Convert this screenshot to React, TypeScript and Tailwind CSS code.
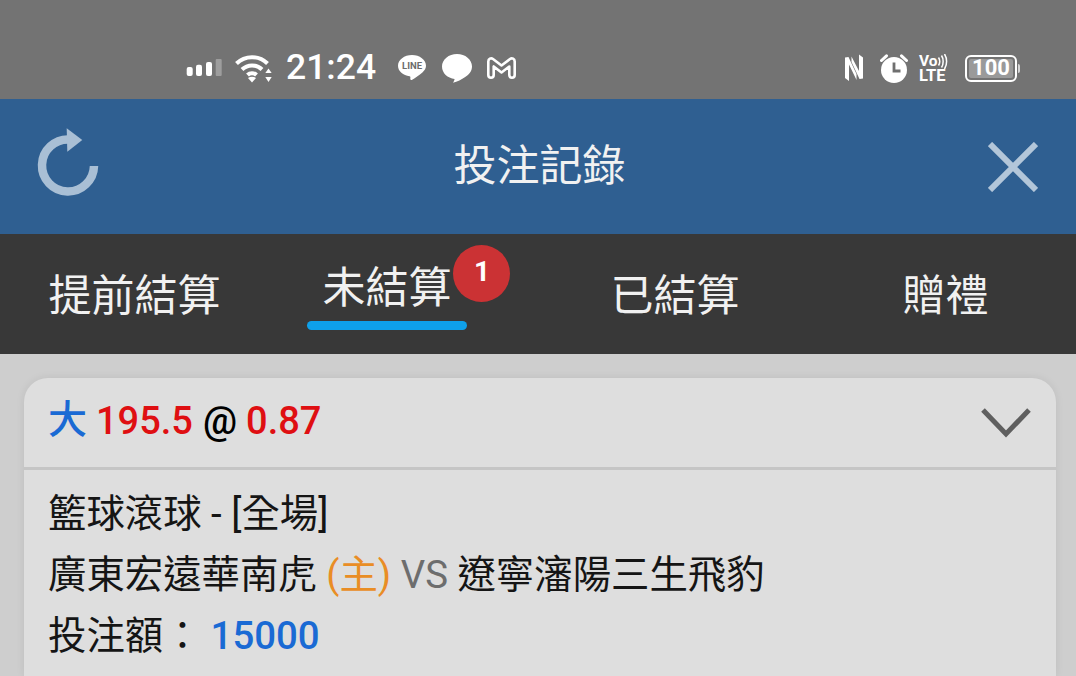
const FONT = "font-['Roboto','Noto_Sans_CJK_TC',sans-serif]";

function SignalIcon() {
  return (
    <svg width="36" height="18" viewBox="0 0 36 18" className="fill-white">
      <rect x="0.7" y="8" width="6" height="9" rx="2" />
      <rect x="10" y="5.7" width="6" height="11.3" rx="2" />
      <rect x="20" y="3" width="6" height="14" rx="2" />
      <rect x="29.7" y="0" width="6" height="17" rx="1" opacity="0.3" />
    </svg>
  );
}

function WifiIcon() {
  return (
    <svg width="38" height="29" viewBox="0 0 38 29" fill="none" stroke="#fff" strokeWidth="4">
      <path d="M1.500 9.500C10 1 24 1 32.500 9.500" />
      <path d="M7 15.500C12.500 10 21.500 10 27 15.500" />
      <path d="M12.500 21C15 18.500 19 18.500 21.500 21" />
      <path d="M17 28.500l-4-4.500c2.400-1.600 5.600-1.600 8 0z" fill="#fff" stroke="none" />
      <path d="M33.500 14.500l3.200 4.500h-6.400zM33.500 28l-3.200-5h6.400z" fill="#fff" stroke="none" />
    </svg>
  );
}

function LineIcon() {
  return (
    <svg width="28" height="27" viewBox="0 0 28 27">
      <path
        d="M14 0C6.300 0 0 4.800 0 10.800c0 5.600 5.200 9.600 11.600 10.400.9.200.9 1 .7 2.400-.1.900.3 1.900 1.500 1.300 3-1.700 7.700-4.700 10.600-7.400C26.800 15.400 28 13.300 28 10.800 28 4.800 21.700 0 14 0z"
        fill="#fff"
      />
      <text x="14" y="14" textAnchor="middle" fontSize="9.500" fontWeight="700" fill="#6b6b6b" fontFamily="Roboto">
        LINE
      </text>
    </svg>
  );
}

function ChatIcon() {
  return (
    <svg width="30" height="29" viewBox="0 0 30 29">
      <path
        d="M15 0C6.700 0 0 5.500 0 12.600c0 6.600 5.600 11.700 12.600 12.400-.2 1.300-.9 2.700-1.700 3.700 4.500-.8 8.700-3.100 12.300-5.600C27.200 20.800 30 17 30 12.600 30 5.500 23.300 0 15 0z"
        fill="#fff"
      />
    </svg>
  );
}

function MailIcon() {
  return (
    <svg width="29" height="22" viewBox="0 0 29 22" fill="none" stroke="#fff" strokeWidth="2.600" strokeLinejoin="round">
      <path d="M1.300 4.500C1.300 1.800 4 .5 6 2l8.500 6.500L23 2c2-1.500 4.700-.2 4.700 2.500V18c0 1.500-1.200 2.700-2.700 2.700s-2.700-1.200-2.700-2.700V9.500l-7.800 6-7.800-6V18c0 1.500-1.200 2.700-2.700 2.700S1.300 19.500 1.300 18z" />
    </svg>
  );
}

function NfcIcon() {
  return (
    <svg width="18" height="30" viewBox="0 0 18 30" className="fill-white">
      <path d="M0 4.500L3.500 4l8 17v6L4 11.500V28L0 25z" />
      <path d="M18 25.500L14.500 26 6.500 9V3.500L14 18V1.500L18 4.500z" />
    </svg>
  );
}

function AlarmIcon() {
  return (
    <svg width="28" height="29" viewBox="0 0 28 29">
      <circle cx="14" cy="16" r="13" fill="#fff" />
      <path d="M1.500 6.500L6.500 1.800M26.500 6.500L21.500 1.800" stroke="#fff" strokeWidth="3" strokeLinecap="round" />
      <path d="M14 8.500V17h6.500" fill="none" stroke="#6f6f6f" strokeWidth="2.800" />
    </svg>
  );
}

function VolteIcon() {
  return (
    <div className="w-[30px] flex flex-col text-white font-bold leading-none">
      <div className="relative h-[15px] text-[15.500px] leading-[15px]">
        Vo
        <svg width="12" height="15" viewBox="0 0 12 15" fill="none" stroke="#fff" strokeWidth="1.500" className="absolute left-[18px] top-0">
          <path d="M1.500 3.500c1.400 2.200 1.400 5.800 0 8M4.500 1.500c2.200 3.200 2.200 8.800 0 12M7.500 0c2.800 4.400 2.800 10.600 0 15" />
        </svg>
      </div>
      <div className="h-[14px] text-[16.500px] leading-[14px]">LTE</div>
    </div>
  );
}

function Battery() {
  return (
    <div className="flex items-center gap-[1px]">
      <div className="w-[52px] h-[27px] rounded-[6px] border-[2.500px] border-white p-[2px] flex">
        <div className="flex-1 rounded-[2px] bg-[#9a9a9a] flex items-center justify-center text-white text-[22px] leading-none font-bold">
          100
        </div>
      </div>
      <div className="w-[2px] h-[9px] rounded-r-sm bg-white/70" />
    </div>
  );
}

function StatusBar() {
  return (
    <div className="h-[99px] bg-[#737373] flex items-center justify-between pl-[186px] pr-[56px] pt-[37px]">
      <div className="flex items-center">
        <SignalIcon />
        <div className="ml-[13px]"><WifiIcon /></div>
        <span className="ml-[13px] text-white text-[35.500px] leading-none font-medium">21:24</span>
        <div className="ml-[22px]"><LineIcon /></div>
        <div className="ml-[16px]"><ChatIcon /></div>
        <div className="ml-[15px]"><MailIcon /></div>
      </div>
      <div className="flex items-center">
        <NfcIcon />
        <div className="ml-[17px]"><AlarmIcon /></div>
        <div className="ml-[11px]"><VolteIcon /></div>
        <div className="ml-[16px]"><Battery /></div>
      </div>
    </div>
  );
}

function Header() {
  return (
    <div className="h-[135px] bg-[#2f5f91] flex items-center justify-between pl-[37px] pr-[38px]">
      <svg width="62" height="70" viewBox="0 0 62 70" fill="none" className="mb-[7px]">
        <path d="M32 11.500A26 26 0 1 0 57 38" stroke="#a9bfd5" strokeWidth="8.500" />
        <path d="M29.700 0.300L45.300 12 30.300 23.700z" fill="#a9bfd5" />
      </svg>
      <h1 className="text-[43px] leading-none text-[#f1f1f1] mr-[8px]">投注記錄</h1>
      <svg width="50" height="50" viewBox="0 0 50 50" stroke="#b3c6d9" strokeWidth="6">
        <path d="M2 2l46 46M48 2L2 48" />
      </svg>
    </div>
  );
}

const TABS = [
  { label: "提前結算", cls: "pt-[4px]" },
  { label: "未結算", cls: "pr-[33px]" },
  { label: "已結算", cls: "pt-[4px] pl-[5px]" },
  { label: "贈禮", cls: "pt-[4px] pl-[8px]" },
];

function Tabs() {
  return (
    <div className="h-[120px] bg-[#383838] grid grid-cols-4">
      {TABS.map((t, i) =>
        i === 1 ? (
          <div key={t.label} className="relative flex flex-col items-center pt-[30px] pr-[33px]">
            <span className="relative text-[43px] leading-[48px] text-[#f1f1f1]">
              {t.label}
              <span className="absolute left-[130px] -top-[19px] w-[57px] h-[57px] rounded-full bg-[#cb3234] flex items-center justify-center text-white text-[28px] font-bold leading-none pl-[2px] pb-[3px]">
                1
              </span>
            </span>
            <div className="w-[160px] h-[9px] rounded-full bg-[#0ea0ea] mt-[9px]" />
          </div>
        ) : (
          <div key={t.label} className={`flex justify-center items-center ${t.cls} text-[43px] leading-none text-[#f1f1f1]`}>
            {t.label}
          </div>
        ),
      )}
    </div>
  );
}

function BetCard() {
  return (
    <div className="rounded-t-[24px] bg-[#dedede] shadow-[0_0_8px_rgba(0,0,0,0.08)] flex-1">
      <div className="h-[92px] border-b-[3px] border-[#c5c5c5] flex items-center justify-between pl-[24px] pr-[25px]">
        <div className="flex items-center text-[38px] font-medium leading-none pb-[4px]">
          <span className="text-[#1a6ad4] text-[39px] font-medium">大</span>
          <span className="ml-[9px] text-[#df0f12]">195.5</span>
          <span className="ml-[10px] text-black">@</span>
          <span className="ml-[9px] text-[#df0f12]">0.87</span>
        </div>
        <svg width="50" height="30" viewBox="0 0 50 30" fill="none" stroke="#5f5f5f" strokeWidth="5">
          <path d="M2 2l23 24L48 2" />
        </svg>
      </div>
      <div className="pl-[24px] pt-[13px] text-[38.400px] leading-[61px] text-[#151515]">
        <div>籃球滾球 - [全場]</div>
        <div>
          廣東宏遠華南虎 <span className="text-[#e98d25]">(主)</span> <span className="text-[#6d6d6d]">VS</span> 遼寧瀋陽三生飛豹
        </div>
        <div className="flex items-center">
          投注額： <span className="ml-[9px] text-[#1a6ad4] font-medium">15000</span>
        </div>
      </div>
    </div>
  );
}

export default function App() {
  return (
    <div className={`w-[1076px] h-[676px] overflow-hidden flex flex-col bg-[#cecece] ${FONT}`}>
      <StatusBar />
      <Header />
      <Tabs />
      <div className="flex-1 flex flex-col pl-[24px] pr-[20px] pt-[24px] min-h-0">
        <BetCard />
      </div>
    </div>
  );
}
